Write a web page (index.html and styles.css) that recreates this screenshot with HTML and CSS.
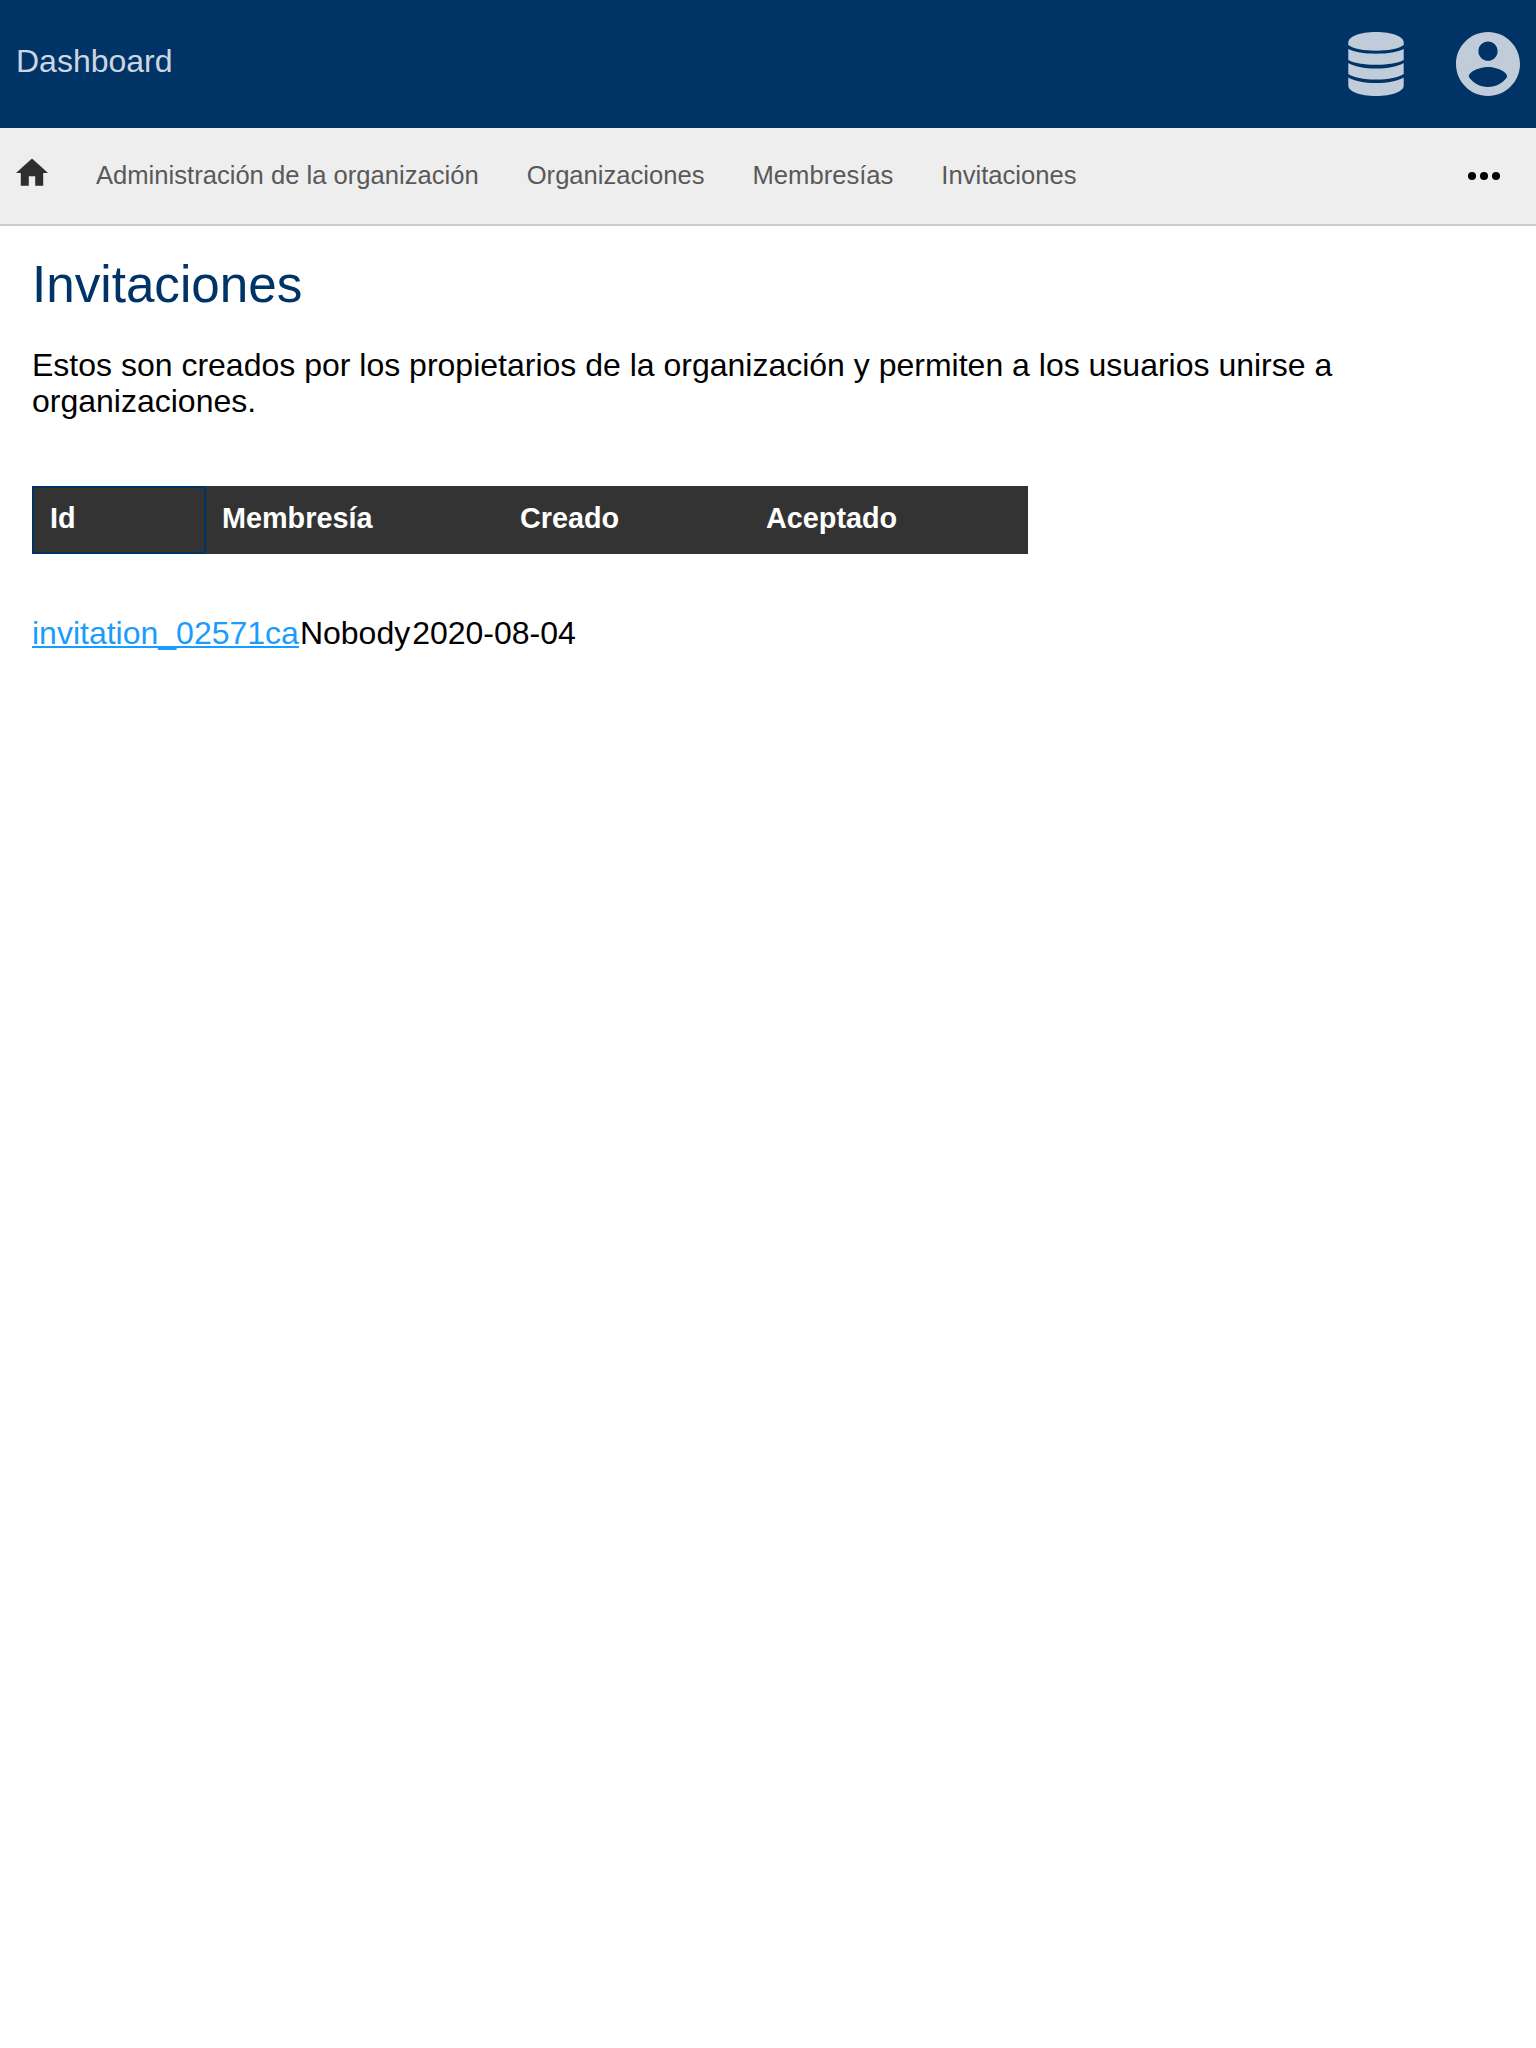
FILE: index.html
```html
<!DOCTYPE html>
<html lang="es">
<head>
<meta charset="utf-8">
<title>Invitaciones</title>
<link rel="stylesheet" href="styles.css">
</head>
<body>
<header class="header">
  <a class="title">Dashboard</a>
  <div class="menus">
    <svg class="icon-db" viewBox="0 0 56 64"><path d="M.3 10.500C.3 4.500 12 0 28 0S55.700 4.500 55.700 10.500V13C51 16.800 40 18.700 28 18.700S5 16.800.3 13Z"/><path d="M.3 17C6 20 16 21.700 28 21.700S50 20 55.700 17V28C51 31 40 32.800 28 32.800S5 31 .3 28Z"/><path d="M.3 31C6 34.500 16 36.600 28 36.600S50 34.500 55.700 31V42C51 45.500 40 47.500 28 47.500S5 45.500.3 42Z"/><path d="M.3 45.500C6 49 16 51 28 51S50 49 55.700 45.500V53.500C55.700 59.500 44 64 28 64S.3 59.500.3 53.500Z"/></svg>
    <svg class="icon-user" viewBox="2 2 20 20"><path d="M12 2C6.480 2 2 6.480 2 12s4.480 10 10 10 10-4.480 10-10S17.520 2 12 2zm0 3c1.660 0 3 1.340 3 3s-1.340 3-3 3-3-1.340-3-3 1.340-3 3-3zm0 14.200c-2.500 0-4.710-1.280-6-3.220.03-1.990 4-3.080 6-3.080 1.990 0 5.970 1.090 6 3.080-1.290 1.940-3.500 3.220-6 3.220z"/></svg>
  </div>
</header>
<nav class="nav">
  <svg class="icon-home" viewBox="2 2.625 20 17.500"><path d="M10 20v-6h4v6h5v-8h3L12 3 2 12h3v8z"/></svg>
  <a>Administración de la organización</a>
  <a>Organizaciones</a>
  <a>Membresías</a>
  <a>Invitaciones</a>
  <svg class="icon-more" viewBox="0 0 32 8"><circle cx="4" cy="4" r="4"/><circle cx="16" cy="4" r="4"/><circle cx="28" cy="4" r="4"/></svg>
</nav>
<main class="content">
  <h1>Invitaciones</h1>
  <p>Estos son creados por los propietarios de la organización y permiten a los usuarios unirse a organizaciones.</p>
  <div class="table-head">
    <div class="th sorted">Id</div>
    <div class="th">Membresía</div>
    <div class="th">Creado</div>
    <div class="th">Aceptado</div>
  </div>
  <div class="row"><a class="link">invitation_02571ca</a><span>Nobody</span><span class="date">2020-08-04</span></div>
</main>
</body>
</html>
```
FILE: styles.css
```css
* { box-sizing: border-box; }
body {
  margin: 0;
  background: #fff;
  color: #000;
  font: 32px/36px "Liberation Sans", Arial, sans-serif;
}
svg { display: block; flex: none; }
.header {
  display: flex;
  justify-content: space-between;
  height: 128px;
  padding: 0 16px;
  background: #036;
}
.title { padding-top: 43px; color: #ccd6e0; }
.menus { display: flex; gap: 52px; padding-top: 32px; fill: #c0ccd9; }
.icon-db { width: 56px; height: 64px; }
.icon-user { width: 64px; height: 64px; }
.nav {
  display: flex;
  align-items: center;
  gap: 48px;
  height: 98px;
  padding: 0 36px 0 16px;
  background: #eee;
  border-bottom: 2px solid #ccc;
  color: #595959;
  font-size: 25.6px;
  line-height: 30px;
}
.nav a { margin-bottom: 2px; }
.icon-home { width: 32px; height: 28px; margin-bottom: 8px; fill: #2e2e2e; }
.icon-more { width: 32px; height: 8px; margin-left: auto; }
.content { padding: 30px 32px 0; }
h1 {
  margin: 0;
  color: #036;
  font-size: 51.2px;
  font-weight: 400;
  line-height: 58px;
}
p { margin: 33px 0 0; }
.table-head {
  display: grid;
  grid-template-columns: 173px 298px 246px 279px;
  width: 996px;
  height: 68px;
  margin-top: 67px;
  background: #333;
  color: #fff;
  font-size: 28.8px;
  font-weight: 700;
  line-height: 32px;
}
.th { padding: 16px 17px; }
.sorted { width: 174px; padding: 14px 16px; border: 2px solid #036; }
.row { display: flex; gap: 1px; margin-top: 61px; }
.date { margin-left: 1px; }
.link {
  color: #1a9cff;
  text-decoration: underline 2px;
  text-decoration-skip-ink: none;
  text-underline-offset: 2px;
}
```
